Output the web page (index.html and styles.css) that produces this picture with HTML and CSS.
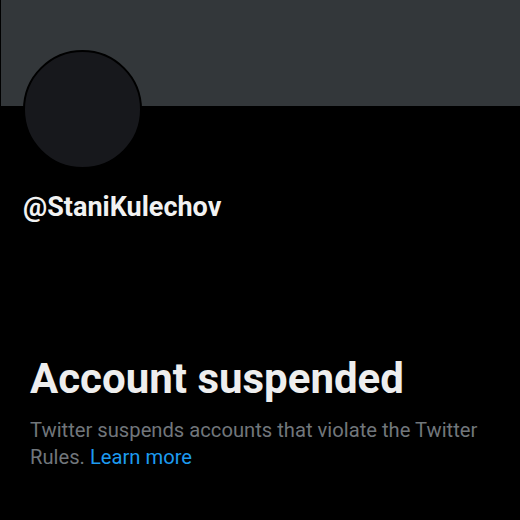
FILE: index.html
```html
<!DOCTYPE html>
<html>
<head>
<meta charset="utf-8">
<link rel="stylesheet" href="styles.css">
</head>
<body>
<div class="page">
  <div class="banner"></div>
  <div class="profile">
    <div class="avatar"></div>
    <div class="handle">@StaniKulechov</div>
  </div>
  <div class="notice">
    <h1 class="title">Account suspended</h1>
    <p class="desc">Twitter suspends accounts that violate the Twitter Rules. <a class="link" href="#">Learn more</a></p>
  </div>
</div>
</body>
</html>
```
FILE: styles.css
```css
html, body {
  margin: 0;
  padding: 0;
  background: #000;
}
.page {
  width: 520px;
  height: 520px;
  background: #000;
  font-family: Roboto, "Liberation Sans", sans-serif;
  overflow: hidden;
}
.banner {
  height: 106px;
  margin-left: 1px;
  background: #33373a;
}
.profile {
  padding-left: 23px;
}
.avatar {
  width: 115px;
  height: 115px;
  margin-top: -56px;
  border-radius: 50%;
  background: #17181c;
  border: 2px solid #000;
}
.handle {
  margin-top: 22px;
  color: #f2f2f2;
  font-weight: 700;
  font-size: 27px;
  line-height: 32px;
}
.notice {
  padding: 0 30px;
  margin-top: 132px;
}
.title {
  margin: 0;
  color: #eeeeee;
  font-size: 42px;
  font-weight: 700;
  line-height: 48px;
}
.desc {
  margin: 14px 0 0;
  color: #71767b;
  font-size: 20.2px;
  line-height: 27px;
}
.link {
  color: #1d9bf0;
  text-decoration: none;
}
```
